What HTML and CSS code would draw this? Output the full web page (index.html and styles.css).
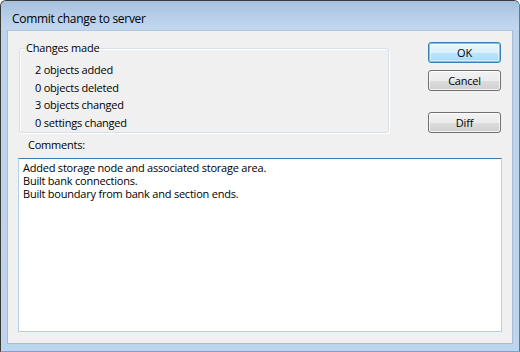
FILE: index.html
```html
<!DOCTYPE html>
<html>
<head>
<meta charset="utf-8">
<title>Commit change to server</title>
<link rel="stylesheet" href="styles.css">
</head>
<body>
<div class="window">
  <div class="titlebar"><span class="title">Commit change to server</span></div>
  <div class="frame">
    <div class="client">
      <div class="top">
        <fieldset class="group">
          <legend class="legend">Changes made</legend>
          <div class="items">
            <div class="item">2 objects added</div>
            <div class="item">0 objects deleted</div>
            <div class="item">3 objects changed</div>
            <div class="item">0 settings changed</div>
          </div>
        </fieldset>
        <div class="buttons">
          <button class="btn default">OK</button>
          <button class="btn">Cancel</button>
          <button class="btn diff">Diff</button>
        </div>
      </div>
      <div class="label">Comments:</div>
      <div class="comments">Added storage node and associated storage area.
Built bank connections.
Built boundary from bank and section ends.</div>
    </div>
  </div>
</div>
</body>
</html>
```

FILE: styles.css
```css
* { box-sizing: border-box; }
html, body { margin: 0; padding: 0; }
body {
  width: 520px;
  height: 352px;
  overflow: hidden;
  background: #ffffff;
  font-family: "Open Sans", "Noto Sans", sans-serif;
  font-size: 11px;
  letter-spacing: -0.22px;
  color: #000;
}
.window {
  width: 520px;
  height: 352px;
  border: 1px solid #3a3a3a;
  border-right-color: #2b8fa6;
  border-bottom-color: #3cc3dc;
  border-radius: 6px 6px 0 0;
  background: linear-gradient(to bottom, #a9c3e0 0px, #bcd3ec 30px, #bfd5ee 100%);
  display: flex;
  flex-direction: column;
  overflow: hidden;
}
.titlebar {
  height: 29px;
  padding: 6px 0 0 11px;
  display: flex;
  align-items: center;
  background: linear-gradient(to bottom, #a6c0de 0%, #b9d0ea 60%, #c2d7ef 100%);
}
.title {
  font-size: 12px;
  letter-spacing: -0.3px;
  line-height: 16px;
  color: #000;
}
.frame {
  flex: 1;
  padding: 0 6px 7px 6px;
  display: flex;
}
.client {
  flex: 1;
  background: #f0f0f0;
  border: 1px solid #a9bcd2;
  border-top-color: #b4c8de;
  padding: 9px 10px 11px 10px;
  display: flex;
  flex-direction: column;
}
.top {
  display: flex;
  height: 93px;
}
.group {
  margin: 0 0 0 1px;
  padding: 0 0 1px 0;
  width: 370px;
  height: 93px;
  border: 1px solid #d5dfe5;
  border-radius: 3px;
  box-shadow: inset 1px 1px 0 #ffffff, 1px 1px 0 #ffffff;
}
.legend {
  margin-left: 5px;
  padding: 0 1px;
  line-height: 16px;
}
.items {
  padding: 5px 0 0 15px;
}
.item {
  line-height: 17.5px;
  height: 17.5px;
}
.buttons {
  margin-left: auto;
  margin-right: 1px;
  padding-top: 2px;
  width: 73px;
  display: flex;
  flex-direction: column;
  gap: 7px;
}
.btn {
  width: 73px;
  height: 21px;
  padding: 0;
  font-family: inherit;
  font-size: 11px;
  letter-spacing: -0.22px;
  color: #000;
  border: 1px solid #707070;
  border-radius: 3px;
  background: linear-gradient(to bottom, #f2f2f2 0%, #ebebeb 50%, #dddddd 51%, #cfcfcf 100%);
  box-shadow: inset 0 0 0 1px rgba(255,255,255,0.75);
}
.btn.default {
  border-color: #3c7fb1;
  background: linear-gradient(to bottom, #eaf6fd 0%, #d9f0fc 50%, #bee6fd 51%, #a7d9f5 100%);
  box-shadow: inset 0 0 0 1px #48d8fb, inset 0 0 0 2px rgba(255,255,255,0.5);
}
.btn.diff {
  margin-top: 14px;
}
.label {
  margin: 5px 0 6px 10px;
  line-height: 14px;
}
.comments {
  flex: 1;
  background: #ffffff;
  border: 1px solid #b5cfe7;
  border-top-color: #3d7bad;
  border-radius: 1px;
  padding: 2px 4px;
  line-height: 13px;
  white-space: pre-line;
}
```
